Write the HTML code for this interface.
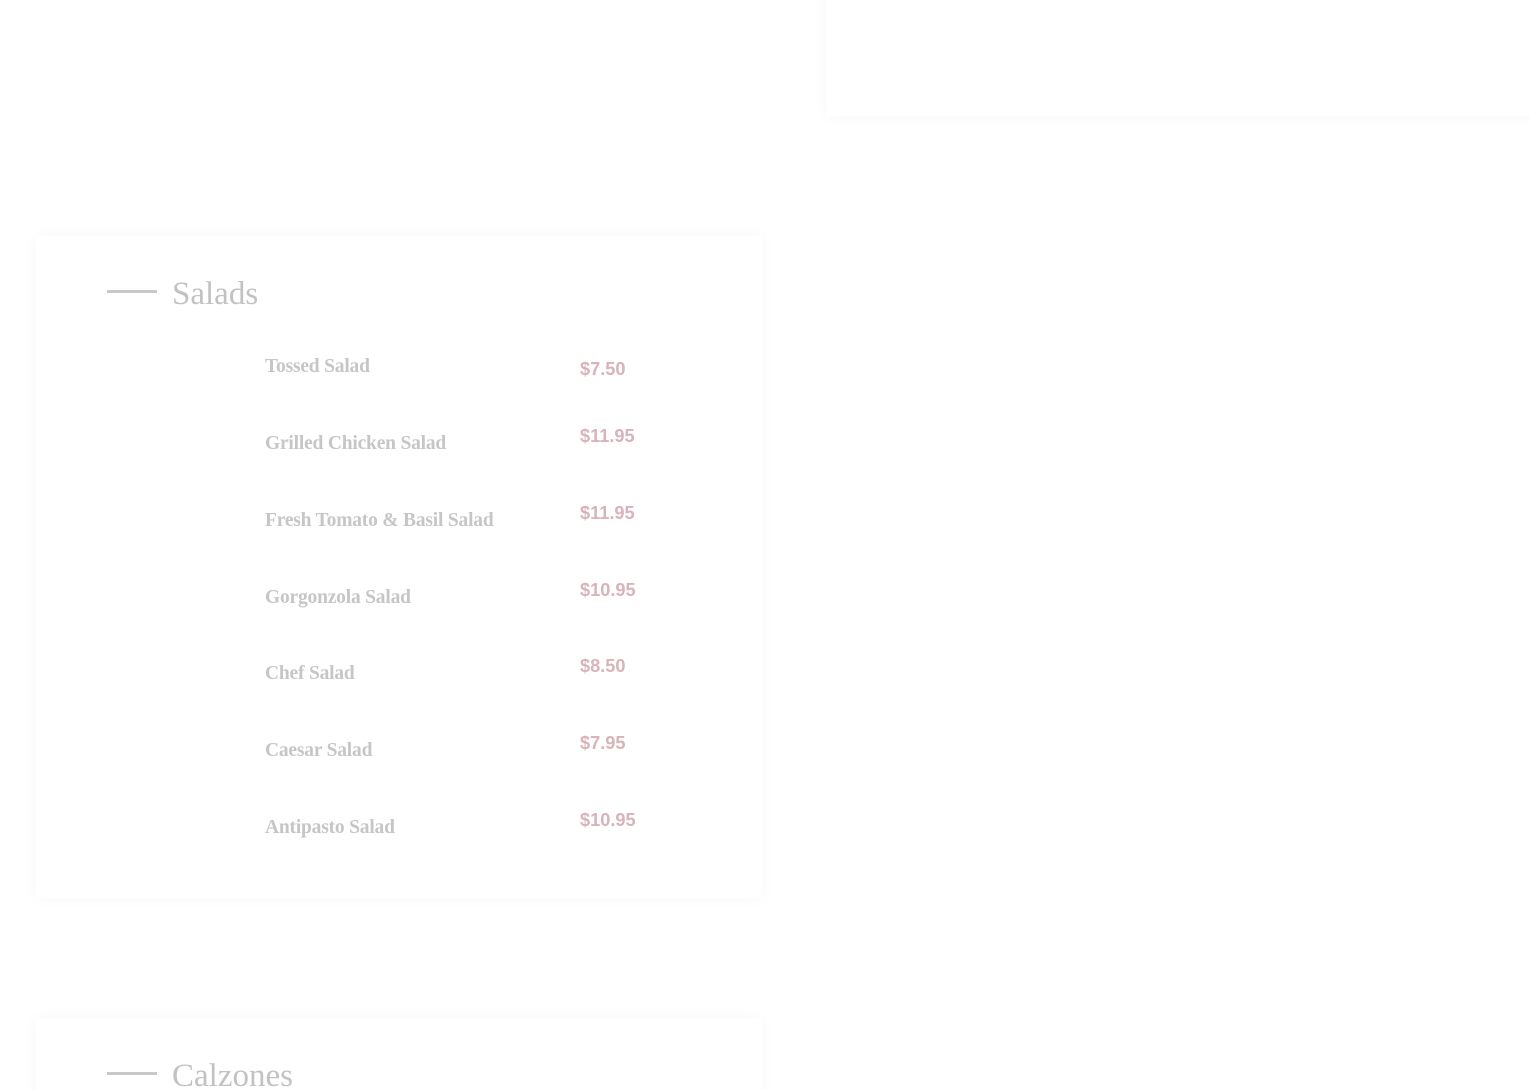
<!DOCTYPE html>
<html><head><meta charset="utf-8"><style>
html,body{margin:0;padding:0;background:#fff;width:1530px;height:1090px;overflow:hidden;position:relative}
.card{position:absolute;background:#fff;box-shadow:0 0 14px rgba(0,0,0,0.035)}
.h{position:absolute;font-family:"Liberation Serif",serif;font-size:33px;color:#c2c2c2}
.line{position:absolute;height:3px;background:#c8c8c8;width:50px}
.n{position:absolute;left:265px;font-family:"Liberation Serif",serif;font-size:19.5px;color:#c6c6c6;font-weight:bold;letter-spacing:-0.2px}
.p{position:absolute;left:580px;font-family:"Liberation Sans",sans-serif;font-size:18.2px;color:#d8b3b9;font-weight:bold}
</style></head><body>
<div class="card" style="left:826px;top:-20px;width:720px;height:136px"></div>
<div class="card" style="left:36px;top:236px;width:726px;height:662px"></div>
<div class="card" style="left:36px;top:1018px;width:726px;height:120px"></div>
<div class="line" style="left:107px;top:290px"></div>
<div class="h" style="left:172px;top:276px">Salads</div>
<div class="line" style="left:107px;top:1072px"></div>
<div class="h" style="left:172px;top:1058px">Calzones</div>
<div class="n" style="top:356px">Tossed Salad</div><div class="p" style="top:359px">$7.50</div>
<div class="n" style="top:433px">Grilled Chicken Salad</div><div class="p" style="top:426px">$11.95</div>
<div class="n" style="top:510px">Fresh Tomato &amp; Basil Salad</div><div class="p" style="top:503px">$11.95</div>
<div class="n" style="top:587px">Gorgonzola Salad</div><div class="p" style="top:580px">$10.95</div>
<div class="n" style="top:663px">Chef Salad</div><div class="p" style="top:656px">$8.50</div>
<div class="n" style="top:740px">Caesar Salad</div><div class="p" style="top:733px">$7.95</div>
<div class="n" style="top:817px">Antipasto Salad</div><div class="p" style="top:810px">$10.95</div>
</body></html>
